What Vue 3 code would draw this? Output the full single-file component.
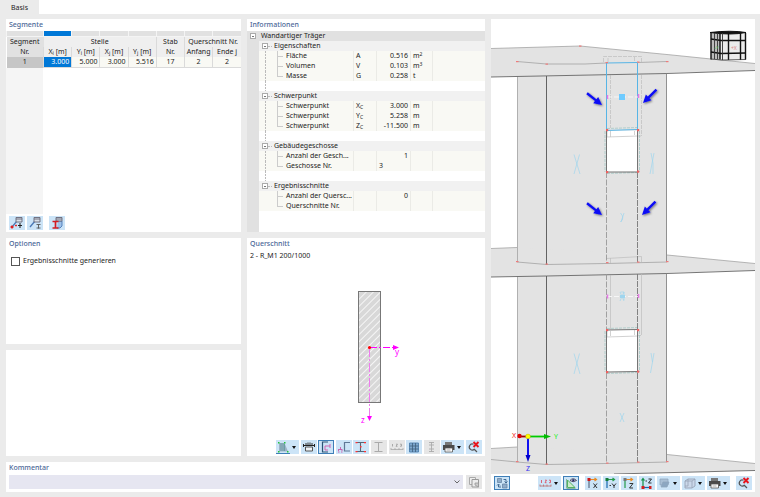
<script setup>
import { h, ref } from "vue";

const generateSections = ref(false);
const comment = ref("");

const columns = [
  { label: "X", sub: "i", unit: "[m]" },
  { label: "Y", sub: "i", unit: "[m]" },
  { label: "X", sub: "j", unit: "[m]" },
  { label: "Y", sub: "j", unit: "[m]" },
  { label: "Nr." },
  { label: "Anfang" },
  { label: "Ende j" },
];

const segment = ["3.000", "5.000", "3.000", "5.516", "17", "2", "2"];

const infoRows = [
  { type: "group", name: "Eigenschaften", first: true },
  { type: "item", name: "Fläche", symbol: "A", value: "0.516", unit: "m", sup: "2" },
  { type: "item", name: "Volumen", symbol: "V", value: "0.103", unit: "m", sup: "3" },
  { type: "item", name: "Masse", symbol: "G", value: "0.258", unit: "t", last: true },
  { type: "blank" },
  { type: "group", name: "Schwerpunkt" },
  { type: "item", name: "Schwerpunkt", symbol: "X", sub: "C", value: "3.000", unit: "m" },
  { type: "item", name: "Schwerpunkt", symbol: "Y", sub: "C", value: "5.258", unit: "m" },
  { type: "item", name: "Schwerpunkt", symbol: "Z", sub: "C", value: "-11.500", unit: "m", last: true },
  { type: "blank" },
  { type: "group", name: "Gebäudegeschosse" },
  { type: "item", name: "Anzahl der Gesch...", value: "1" },
  { type: "item", name: "Geschosse Nr.", value: "3", left: true, last: true },
  { type: "blank" },
  { type: "group", name: "Ergebnisschnitte", end: true },
  { type: "item", name: "Anzahl der Quersc...", value: "0", end: true },
  { type: "item", name: "Querschnitte Nr.", last: true, end: true },
];

// each icon is a list of [path, stroke, fill, stroke width] on a 16x14 canvas
const icons = {
  pickMember: [
    ["M3 11 8 5", "#4a78b5", "none", 1.2],
    ["M7 1.500h6v4.500h-6zM7 3h6", "#667", "#d8dfe8", 0.9],
    ["M2 10h2v2h-2zM6.500 9h1v1h-1z", "#d22", "#d22", 0.8],
    ["M11 7v5M9 9.500h4", "#222", "none", 1],
  ],
  pickSection: [
    ["M3 11 8 5", "#4a78b5", "none", 1.3],
    ["M7 1.500h6v4.500h-6zM7 3h6", "#667", "#d8dfe8", 0.9],
    ["M9.500 8.500h4M9.500 12h4M11.500 8.500v4", "#555", "none", 0.9],
  ],
  sectionInfo: [
    ["M9 5h4v5l-2 2H8", "#4a78b5", "#9ec1ea", 0.9],
    ["M7 1.500h6v3.500h-6zM7 3h6", "#667", "#d8dfe8", 0.9],
    ["M3.500 5.500h6M3.500 12h6M6.500 5.500v6.500", "#d21b24", "none", 1.7],
  ],
  stress: [
    ["M3 3 3 11.500H12L8.500 3z", "none", "#9db4c6", 0],
    ["M5 3v8M7 3v8M8.500 4v7", "#5f97a0", "none", 0.8],
    ["M2 2h1.500v1.500H2zM8 2h1.500v1.500H8zM2 11h1.500v1.500H2zM11 11h1.500v1.500H11z", "none", "#22c43a", 0],
  ],
  dims: [
    ["M2.500 5.500h11M2.500 4v3M13.500 4v3", "#222", "none", 1],
    ["M5 5V3M7 5V2.500M9 5V2.500M11 5V3", "#333", "none", 1],
    ["M4.500 7h7v4h-7z", "#555", "#eef3f8", 1],
  ],
  axes: [
    ["M10 2H4.500v10H10", "#2c5275", "none", 1.2],
    ["M7 10V6h5M12 4v4M7 10h3", "#d05aa8", "none", 0.9],
  ],
  center: [
    ["M14 2.500H8.500v8.500H14", "#5f7896", "none", 1.2],
    ["M2 12h1.500M5 12h1.500M3 9.500h3M4.500 7v3M2.500 11v-2M6 11v-2", "#c55aa8", "none", 0.9],
  ],
  profileRed: [
    ["M3 2.500h9M3 11.500h9M7.500 2.500v9", "#567", "none", 1.1],
    ["M2.500 2h2v1.200h-2zM11 2h2v1.200h-2zM2.500 11h2v1.200h-2zM11 11h2v1.200h-2zM7 6h1.500v1.500H7z", "none", "#f33", 0],
  ],
  profileGrey: [["M3.500 2.500h8M3.500 11.500h8M7.500 2.500v9", "#aaa", "none", 1]],
  numbersGrey: [
    ["M2 9.500h12M2 8v2M6 8v2M10 8v2M14 8v2", "#aaa", "none", 0.8],
    ["M3.500 4v2.500M7 4.200h1.500L7 6.300h1.500M11 4.200h1.500v2H11", "#999", "none", 0.8],
  ],
  grid: [
    ["M3.500 3h9v9h-9z", "#4f80ae", "#7da7cd", 0.9],
    ["M6.500 3v9M9.500 3v9M3.500 6h9M3.500 9h9", "#3f5f7e", "none", 0.8],
  ],
  profileDots: [["M5 2.500h5M5 5h5M5 9h5M5 11.500h5M7.500 2v10", "#aaa", "none", 0.9]],
  print: [
    ["M4 2h7v3H4z", "none", "#777", 0],
    ["M2 5h11.500v5H2z", "none", "#4a4a4a", 0],
    ["M4 8h7.500v4H4z", "#555", "#fff", 0.8],
    ["M5.500 10h4", "#888", "none", 0.7],
  ],
  reset: [
    ["M7.500 4.200a3 3 0 1 0 1 4.800M8 9 11 12", "#555", "none", 1.2],
    ["M7.500 2 12.500 7M12.500 2 7.500 7", "#e8141c", "none", 1.9],
  ],
  copy: [
    ["M3.500 2.500h6v7h-6z", "#aaa", "#eee", 1],
    ["M6 4.500h6.500v7.500H6z", "#999", "#ececec", 1],
    ["M9 8h3.500v4L9 10z", "#999", "#ccc", 0.8],
  ],
  swap: [
    ["M3.500 2.500h4v4h-4zM8.500 8h4.500v4h-4.500z", "#6786a5", "#8facca", 0.8],
    ["M9.500 3.500h2.500v3M10.500 5.500 12 7 13.500 5.500M7 11H4.500V8.500M3 9.500 4.500 8 6 9.500", "#345d87", "none", 0.9],
  ],
  numbersRed: [
    ["M2 10h11M2 8.500v2M5.500 8.500v2M9 8.500v2M13 8.500v2", "#b77", "none", 0.9],
    ["M3.500 4v3M7 4.200h1.500L7 6.700h1.500M11 4.200h1.500v2.500H11", "#d45", "none", 0.8],
  ],
  viewPlane: [
    ["M4.500 4v7.500h7.500z", "#53b165", "#cdeacb", 1],
    ["M3.500 12V3M3.500 12.500h9", "#7a8", "none", 0.8],
    ["M7 4.500Q10 1 13.500 4.500Q10 7 7 4.500z", "#445", "#dde", 0.9],
    ["M9.300 3.300h2v2h-2z", "none", "#226", 0],
  ],
  axisX: [
    ["M4 3.500h7M9.500 2 11.500 3.500 9.500 5", "#e98a24", "none", 1.2],
    ["M4 4v8", "#5a6b80", "none", 1.2],
    ["M2.500 2h3v3h-3z", "none", "#d01818", 0],
    ["M8.500 7.500 12 12M12 7.500 8.500 12", "#222", "none", 0.9],
  ],
  axisY: [
    ["M4 3.500h7M9.500 2 11.500 3.500 9.500 5", "#259b4a", "none", 1.2],
    ["M4 4v8", "#1769b0", "none", 1.2],
    ["M2.500 2h3v3h-3z", "none", "#137c3a", 0],
    ["M9 7.500l2 2.500L13 7.500M11 9.500V12M6.500 9.500h1.500", "#222", "none", 0.9],
  ],
  axisZ: [
    ["M4 3.500h7M9.500 2 11.500 3.500 9.500 5", "#e98a24", "none", 1.2],
    ["M4 4v8", "#239b4a", "none", 1.2],
    ["M2.500 2h3v3h-3z", "none", "#777", 0],
    ["M8.500 7.500h3.500L8.500 12H12", "#222", "none", 0.9],
  ],
  axisMinusZ: [
    ["M4 3v8M2.500 4.500 4 2.500 5.500 4.500", "#159047", "none", 1.2],
    ["M4 11.500h7", "#1769b0", "none", 1.2],
    ["M2.500 10h3v3h-3zM10 10h2.500v3H10z", "none", "#d32020", 0],
    ["M9.500 3h3L9.500 7h3M6.500 5H8", "#222", "none", 0.9],
  ],
  solids: [
    ["M3 3h8v6H3z", "#8fa6bc", "#a9bfd4", 0.8],
    ["M6 6h6l-2 5H4z", "#8fa6bc", "#8ca7c1", 0.8],
  ],
  box: [
    ["M3 5l3-2h7v7l-3 2H3z", "#97a3b6", "#cbd8ea", 0.9],
    ["M3 5h7v7M10 5l3-2M6 3v7H3", "#97a3b6", "none", 0.8],
  ],
};

const ToolIcon = (props) =>
  h(
    "svg",
    { viewBox: "0 0 16 14", width: 16, height: 14, "aria-hidden": "true" },
    icons[props.name].map(([d, stroke, fill, width]) =>
      h("path", { d, stroke, fill, "stroke-width": width })
    )
  );
ToolIcon.props = ["name"];

const segmentTools = [
  { icon: "pickMember", label: "Stab wählen" },
  { icon: "pickSection", label: "Schnitt wählen" },
  { icon: "sectionInfo", label: "Querschnitt bearbeiten", apart: true },
];

const sectionTools = [
  { icon: "stress", label: "Spannungspunkte", menu: true, half: true },
  { icon: "dims", label: "Bemaßung" },
  { icon: "axes", label: "Hauptachsen", active: true },
  { icon: "center", label: "Schubmittelpunkt" },
  { icon: "profileRed", label: "Profilpunkte" },
  { icon: "profileGrey", label: "Profil", disabled: true },
  { icon: "numbersGrey", label: "Nummerierung", disabled: true },
  { icon: "grid", label: "Raster" },
  { icon: "profileDots", label: "Teile", disabled: true },
  { icon: "print", label: "Drucken", menu: true },
  { icon: "reset", label: "Ansicht zurücksetzen" },
];

const sceneTools = [
  { icon: "swap", label: "Ansicht wechseln", active: true },
  { icon: "numbersRed", label: "Nummerierung", menu: true, far: true },
  { icon: "viewPlane", label: "Arbeitsebene", active: true },
  { icon: "axisX", label: "Ansicht in X", apart: true },
  { icon: "axisY", label: "Ansicht gegen Y" },
  { icon: "axisZ", label: "Ansicht in Z" },
  { icon: "axisMinusZ", label: "Ansicht gegen Z" },
  { icon: "solids", label: "Darstellung", menu: true },
  { icon: "box", label: "Projektion", menu: true },
  { icon: "print", label: "Drucken", menu: true },
  { icon: "reset", label: "Ansicht zurücksetzen", apart: true },
];

const pointers = [
  "translate(602 105) rotate(38)",
  "translate(643 103) rotate(135)",
  "translate(602 215) rotate(38)",
  "translate(642 215) rotate(135)",
];

const nodes = [
  [580, 46], [517, 61.5], [546.5, 64], [606.5, 62.5], [638, 62], [667, 61.5],
  [517, 261.5], [546.5, 264], [607, 262.5], [638, 262], [667, 261.5],
  [517, 461.5], [546.5, 464], [607, 463], [638, 462], [667, 461.5],
];

const corners = [
  [607, 130], [638, 130], [607, 172], [638, 171.5],
  [607, 330], [638, 330], [607, 372], [638, 371.5],
];
</script>

<template>
  <div class="app">
    <nav class="tabs">
      <a href="#basis" class="tab">Basis</a>
    </nav>
    <main class="board">
      <section class="panel segments">
        <h2>Segmente</h2>
        <div class="sheet">
          <table class="grid">
            <colgroup>
              <col class="col-nr" />
              <col v-for="n in 7" :key="n" />
            </colgroup>
            <thead>
              <tr class="strip">
                <td></td>
                <td v-for="n in 7" :key="n" :class="{ picked: n === 1 }"></td>
              </tr>
              <tr>
                <th rowspan="2" class="corner">Segment<br />Nr.</th>
                <th colspan="4">Stelle</th>
                <th class="cut">Stab</th>
                <th colspan="2" class="cut">Querschnitt Nr.</th>
              </tr>
              <tr>
                <th v-for="(c, i) in columns" :key="i" class="cut">
                  {{ c.label }}<sub v-if="c.sub">{{ c.sub }}</sub> {{ c.unit }}
                </th>
              </tr>
            </thead>
            <tbody>
              <tr>
                <th class="row-nr">1</th>
                <td v-for="(v, i) in segment" :key="i" :class="{ num: i < 4, current: i === 0 }">{{ v }}</td>
              </tr>
            </tbody>
          </table>
          <div class="rest"></div>
        </div>
        <div class="tools start">
          <button v-for="t in segmentTools" :key="t.icon" type="button" class="tool" :class="{ apart: t.apart }" :aria-label="t.label">
            <ToolIcon :name="t.icon" />
          </button>
        </div>
      </section>

      <section class="panel info">
        <h2>Informationen</h2>
        <div class="tree">
          <table>
            <colgroup>
              <col class="c-name" />
              <col class="c-symbol" />
              <col class="c-value" />
              <col class="c-unit" />
              <col />
            </colgroup>
            <tbody>
              <tr class="root">
                <th colspan="5">
                  <div class="node"><span class="toggle"></span>Wandartiger Träger</div>
                </th>
              </tr>
              <tr v-for="(r, i) in infoRows" :key="i" :class="r.type">
                <th v-if="r.type === 'group'" colspan="5">
                  <div class="node">
                    <span class="lane"><span class="toggle"></span></span>
                    <span class="dash"></span>{{ r.name }}
                  </div>
                </th>
                <td v-else-if="r.type === 'blank'" colspan="5">
                  <div class="node"><span class="lane line"></span></div>
                </td>
                <template v-else>
                  <th>
                    <div class="node">
                      <span class="lane" :class="{ line: !r.end }"></span>
                      <span class="elbow" :class="{ last: r.last }"></span>
                      {{ r.name }}
                    </div>
                  </th>
                  <td>{{ r.symbol }}<sub v-if="r.sub">{{ r.sub }}</sub></td>
                  <td :class="r.left ? 'left' : 'value'">{{ r.value }}</td>
                  <td>{{ r.unit }}<sup v-if="r.sup">{{ r.sup }}</sup></td>
                  <td></td>
                </template>
              </tr>
            </tbody>
          </table>
        </div>
      </section>

      <section class="panel options">
        <h2>Optionen</h2>
        <label class="check">
          <input v-model="generateSections" type="checkbox" />
          Ergebnisschnitte generieren
        </label>
      </section>

      <section class="panel spare"></section>

      <section class="panel profile">
        <h2>Querschnitt</h2>
        <p>2 - R_M1 200/1000</p>
        <svg class="drawing" viewBox="247 262 238 176">
          <defs>
            <pattern id="hatch" width="5" height="5" patternUnits="userSpaceOnUse" patternTransform="rotate(45)">
              <rect width="5" height="5" fill="#d8d8d8" />
              <path d="M0.500 0v5" stroke="#f6f6f6" />
            </pattern>
          </defs>
          <rect x="358.500" y="291.500" width="22" height="111" fill="url(#hatch)" stroke="#777" />
          <path d="M370 347.500h24" stroke="#f0f" stroke-dasharray="7 2 2 2" />
          <path d="M369.500 348v68" stroke="#ee7cee" stroke-dasharray="9 2 2 2" />
          <path d="M393 345l6 2.500-6 2.500zM367 416h5l-2.500 5z" fill="#f0f" />
          <circle cx="369.500" cy="347.500" r="1.600" fill="#f00" />
          <text x="395" y="355" fill="#f0f" font-size="8">y</text>
          <text x="361" y="423" fill="#f0f" font-size="8">z</text>
        </svg>
        <div class="tools section-tools">
          <button
            v-for="t in sectionTools" :key="t.icon" type="button" class="tool"
            :class="{ active: t.active, menu: t.menu, half: t.half }" :disabled="t.disabled" :aria-label="t.label"
          >
            <ToolIcon :name="t.icon" />
          </button>
        </div>
      </section>

      <section class="panel comment">
        <h2><label for="comment">Kommentar</label></h2>
        <div class="entry">
          <div class="combo">
            <select id="comment" v-model="comment">
              <option value=""></option>
            </select>
            <svg class="chevron" viewBox="0 0 6 4" width="6" height="4"><path d="M0.500 0.500 3 3 5.500 0.500" fill="none" stroke="#666" /></svg>
          </div>
          <button type="button" class="tool" disabled aria-label="Kommentare"><ToolIcon name="copy" /></button>
        </div>
      </section>

      <section class="panel scene">
        <svg class="model" viewBox="491 19 264 455" preserveAspectRatio="xMidYMid slice">
          <defs>
            <filter id="drop" x="-50%" y="-50%" width="200%" height="200%">
              <feDropShadow dx="1" dy="1" stdDeviation="0.800" flood-color="#000" flood-opacity="0.500" />
            </filter>
          </defs>
          <!-- slabs and core walls -->
          <g fill="#e3e3e3">
            <path d="M517 70H667V460H517z" />
            <path d="M491 48.500 580 46 672 55 755 63.500V70.500L667 73 491 77z" />
            <path d="M491 248.500 517 247.500 667 255 755 263.500V270.500L667 273 491 277z" />
            <path d="M491 448.500 517 447 667 454.500 755 463.500V470.500L614 474H491z" />
          </g>
          <g fill="none" stroke="#999" stroke-width="0.700">
            <path d="M491 48.500 580 46 672 55 755 63.500" />
            <path d="M517 61.500 546.500 64H585L606 63M638 62.500 667 61.500" />
            <path d="M491 248.500 517 247.500M667 255 755 263.500M491 448.500 517 447M667 454.500 755 463.500" />
            <path d="M517.500 76.500V262M517.500 276.500V462" />
            <path d="M517 262 546.500 264.500 606 263.500 667 262M491 459.500 517 462 546.500 464.500 606 463.500 667 462" />
          </g>
          <g fill="none" stroke="#666" stroke-width="0.900">
            <path d="M491 77 667 73.500 755 70.500M491 277 546.500 276 667 273.500 755 270.500M614 474 755 470.500" />
            <path d="M546.500 76V264.500M546.500 276V464.500" stroke="#555" />
            <path d="M666.500 73.500V262M666.500 273.500V462" stroke="#888" />
          </g>
          <path d="M607 130.500H637.500V171.500L607 172zM607 330.500 637.500 329.500V371.500L607 372z" fill="#fff" />
          <!-- hidden beam edges -->
          <g fill="none" stroke="#bdbdbd" stroke-width="0.700">
            <path d="M603.500 62V56.500H641.500V62M608 62V58M634.500 61V56.500M610.500 75V128M641.500 75V136" stroke-dasharray="4 1" />
            <path d="M607 131V137L638 136M610.500 131V137M634.500 131V135M638 136H641" />
            <path d="M606 258.500 641.500 256.500V262M610.500 258V263M610.500 275V329M641.500 274V335" />
            <path d="M607 331V337L638 336M610.500 331V336M634.500 330V335M638 335.500H641" />
          </g>
          <g fill="none" stroke="#9cc4c2" stroke-width="0.700" stroke-dasharray="3 1">
            <path d="M605 131V172M639.500 131V172M607 173.500 638 172.500M607 128.500 638 127.500" />
            <path d="M605 331V372M639.500 331V372M607 373.500 638 372.500M607 328.500 638 327.500" />
          </g>
          <g fill="none" stroke="#666" stroke-width="0.900">
            <path d="M606.500 131V172M637.500 131V172M606.500 172H638M606.500 330V372M637.500 330V372M606.500 330 638 329.500M606.500 372 638 371.500" />
            <path d="M637.500 172V262M637.500 274V329M637.500 373V462" stroke-dasharray="6 1" stroke="#777" />
            <path d="M606.500 172V262M606.500 274V329M606.500 373V462" stroke-dasharray="6 1.500" stroke="#999" />
          </g>
          <path d="M606.500 130.500V63L637.500 62.500V129.500z" fill="none" stroke="#57b5e6" />
          <path d="M607 97H638M607 296.500H638" stroke="#f6f6f6" stroke-dasharray="5 2" />
          <rect x="619" y="94" width="6" height="6" fill="#6fcbff" />
          <!-- local axis marks -->
          <g fill="none" stroke="#9fd5ee" stroke-width="0.700">
            <path d="M574 154.500 580 174M579.500 154.500 574 174M651 153Q654 163 653 174M654 153 650 174" />
            <path d="M574 353.500 580 374M579.500 353.500 574 374M651 353 652.500 362 650.500 373M654 353 652.500 362" />
            <path d="M620.500 213Q625 218 620.500 222M624 213 621 222M620 292 624 301M624 292 620 301M620.500 292H624V300M620 413 624 422M624 413 620 422" />
          </g>
          <path d="M620 295h5v3h-5z" fill="#9fd5ee" />
          <path d="M607.500 95v4M638.500 94v4M607.500 294.500v4M638.500 294v4" stroke="#e779e7" stroke-width="1.500" />
          <rect v-for="([x, y], i) in nodes" :key="'n' + i" :x="x - 1" :y="y - 0.5" width="2.500" height="1.200" fill="#ef7b7b" />
          <rect v-for="([x, y], i) in corners" :key="'c' + i" :x="x - 1" :y="y - 1" width="2.200" height="2.200" fill="#f06060" />
          <g filter="url(#drop)">
            <path v-for="p in pointers" :key="p" d="M-19-1.200H-8V-4L0 0-8 4V1.200H-19z" fill="#1010f5" :transform="p" />
          </g>
          <!-- coordinate axes -->
          <path d="M528 436.500H520" stroke="#a00000" stroke-width="1.800" />
          <circle cx="519.500" cy="436" r="2.200" fill="#d00" />
          <path d="M528 436.500H545" stroke="#0c0" stroke-width="1.800" />
          <path d="M544 434l7 2.500-7 2.500z" fill="#0b0" />
          <path d="M528 437V456" stroke="#1010f0" stroke-width="2" />
          <path d="M525.500 455h5l-2.500 7z" fill="#00c" />
          <circle cx="528" cy="436.500" r="2.400" fill="#ff0" stroke="#a90" stroke-width="0.400" />
          <g font-size="7">
            <text x="512" y="438" fill="#f02020">X</text>
            <text x="554" y="439" fill="#20f020">Y</text>
            <text x="526" y="471" fill="#3030f0">Z</text>
          </g>
          <!-- view cube -->
          <path d="M710.500 33 730 31.500 745.500 33V59.500H710.500z" fill="#ebebeb" />
          <path d="M711 33H720V59.500H711z" fill="#bcbcbc" />
          <path d="M710 32.500Q731 30 746 32.500Q731 35.500 710 32.500z" fill="#111" stroke="#111" />
          <path d="M711 39 721 40.500H746M711 52 721 53.500 746 53" fill="none" stroke="#111" stroke-width="1.500" />
          <path d="M711 33V59.500M720 33V59.500M728.500 34V60M740.500 33V60M745.500 33V59.500" stroke="#111" stroke-width="1.400" />
          <path d="M714.500 33V59M717.500 33V59M722.500 33V60" stroke="#333" stroke-width="0.900" />
          <path d="M711 59 722 60 746 59.500" fill="none" stroke="#333" stroke-width="0.800" />
          <text x="731" y="49.500" fill="#d88" font-size="5">+X</text>
          <text x="714" y="49" fill="#5b5" font-size="4">+Y</text>
        </svg>
        <div class="tools scene-tools">
          <button
            v-for="t in sceneTools" :key="t.icon" type="button" class="tool"
            :class="{ active: t.active, menu: t.menu, apart: t.apart, far: t.far }" :aria-label="t.label"
          >
            <ToolIcon :name="t.icon" />
          </button>
        </div>
      </section>
    </main>
  </div>
</template>

<style>
body {
  margin: 0;
  background: #ebebeb;
}
</style>

<style scoped>
.app {
  display: flex;
  flex-direction: column;
  min-height: 100vh;
  background: #ebebeb;
  color: #1c1c1c;
  font: 7px/10px "Noto Sans", "Open Sans", sans-serif;
}

.tabs {
  display: flex;
  height: 14px;
  background: #fff;
}

.tab {
  box-sizing: border-box;
  width: 39px;
  padding-top: 3px;
  background: #ebebeb;
  color: inherit;
  text-align: center;
  text-decoration: none;
}

.board {
  flex: 1;
  display: grid;
  grid-template-columns: 235fr 238fr 264fr;
  grid-template-rows: 213fr 106fr 106fr 30px;
  grid-template-areas:
    "segments info scene"
    "options profile scene"
    "spare profile scene"
    "comment comment scene";
  gap: 6px;
  padding: 5px 5px 5px 6px;
}

.panel {
  display: flex;
  flex-direction: column;
  min-width: 0;
  background: #fff;
}

.segments { grid-area: segments; }
.info { grid-area: info; }
.options { grid-area: options; }
.spare { grid-area: spare; }
.profile { grid-area: profile; }
.comment { grid-area: comment; }
.scene { grid-area: scene; }

h2 {
  margin: 0;
  padding: 1px 3px;
  color: #4b6797;
  font-size: 7px;
  font-weight: 500;
}

table {
  width: 100%;
  border-collapse: collapse;
  table-layout: fixed;
}

th,
td {
  height: 10px;
  padding: 0;
  font-weight: 400;
  line-height: 10px;
  white-space: nowrap;
}

sub,
sup {
  font-size: 5px;
  line-height: 0;
}

sub {
  vertical-align: -1px;
}

sup {
  vertical-align: 2px;
}

/* segment table */
.sheet {
  flex: 1;
  display: flex;
  flex-direction: column;
}

.col-nr {
  width: 37px;
}

.grid th {
  background: #efefef;
  text-align: center;
}

.grid .strip td {
  height: 5px;
  border-bottom: 1px solid #f4f4f4;
  border-left: 1px solid #f4f4f4;
  background: #e1e1e1;
  line-height: 5px;
}

.grid .strip .picked {
  background: #0078d7;
}

.grid .cut {
  border-left: 1px solid #dadada;
}

.grid .corner {
  background: #e1e1e1;
}

.grid .row-nr {
  background: #c6c6c6;
}

.grid tbody td {
  border: 1px solid #dadada;
  border-width: 0 0 1px 1px;
  background: #f9f9f4;
  text-align: center;
}

.grid tbody .num {
  padding-right: 2px;
  text-align: right;
}

.grid tbody .current {
  background: #0078d7;
  color: #fff;
}

.rest {
  flex: 1;
  width: 37px;
  background: #f5f5f5;
}

/* property tree */
.tree {
  flex: 1;
  background: linear-gradient(to right, #e1e1e1 12px, #fff 12px);
}

.c-name { width: 106px; }
.c-symbol { width: 23px; }
.c-value { width: 34px; }
.c-unit { width: 22px; }

.tree th {
  text-align: left;
}

.node {
  display: flex;
  align-items: center;
  height: 10px;
}

.root {
  background: #e1e1e1;
}

.root .toggle {
  margin: 0 5px 0 3px;
}

.group .node,
.item .node,
.blank .node {
  margin-left: 12px;
}

.group .node { background: #f1f1f1; }
.item .node { background: #f9f9f4; }

.item td {
  padding-left: 3px;
  box-shadow: inset 1px 0 #ebebe6;
  background: #f9f9f4;
}

.item .value {
  padding: 0 2px 0 0;
  text-align: right;
}

.toggle {
  box-sizing: border-box;
  width: 6px;
  height: 6px;
  border: 1px solid #aaa;
  background: linear-gradient(#777, #777) center / 2px 1px no-repeat #fff;
}

.lane {
  display: flex;
  flex: none;
  align-items: center;
  box-sizing: border-box;
  width: 9px;
  height: 10px;
  padding-left: 3px;
}

.lane.line {
  background: repeating-linear-gradient(#bbb 0 2px, transparent 2px 3px) 6px 0 / 1px 10px no-repeat;
}

.dash {
  width: 4px;
  margin-right: 2px;
  border-top: 1px dotted #bbb;
}

.elbow {
  flex: none;
  width: 6px;
  height: 10px;
  margin: 0 3px 0 9px;
  background:
    linear-gradient(#ccc, #ccc) 0 0 / 1px 10px no-repeat,
    linear-gradient(#ccc, #ccc) 0 5px / 6px 1px no-repeat;
}

.elbow.last {
  background:
    linear-gradient(#ccc, #ccc) 0 0 / 1px 5px no-repeat,
    linear-gradient(#ccc, #ccc) 0 5px / 6px 1px no-repeat;
}

/* options */
.check {
  display: flex;
  align-items: center;
  gap: 3px;
  padding: 6px 5px;
}

.check input {
  appearance: none;
  box-sizing: border-box;
  width: 9px;
  height: 9px;
  margin: 0;
  border: 1px solid #555;
  background: #fff;
}

.check input:checked {
  background: #0078d7;
}

/* cross-section */
.profile p {
  margin: 0;
  padding: 1px 3px;
}

.drawing,
.model {
  flex: 1 1 0px;
  width: 100%;
  height: 0;
  min-height: 0;
}

/* toolbars */
.tools {
  display: flex;
  gap: 2px;
  padding: 2px 3px;
}

.section-tools {
  align-self: flex-end;
  justify-content: space-between;
  gap: 0;
  width: 206px;
}

.scene-tools {
  background: #fff;
}

.tool {
  box-sizing: border-box;
  display: flex;
  flex: none;
  align-items: center;
  justify-content: center;
  width: 16px;
  height: 14px;
  padding: 0;
  border: 0;
  background: #cce4f7;
}

.tool.apart { margin-left: 4px; }
.tool.far { margin-left: auto; }

.tool.active {
  box-shadow: inset 0 0 0 1px #3f7fb8;
}

.tool.half {
  background: linear-gradient(#3f7fb8, #3f7fb8) 0 100% / 14px 1px no-repeat #cce4f7;
}

.tool:disabled {
  background: #e6e6e6;
}

.tool.menu {
  justify-content: flex-start;
  width: 23px;
}

.tool.menu::after {
  content: "";
  border: 2px solid transparent;
  border-top: 3px solid #111;
  border-bottom: 0;
}

/* comment */
.entry {
  display: flex;
  gap: 3px;
  padding: 1px 3px 3px;
}

.combo {
  position: relative;
  flex: 1;
}

.combo select {
  appearance: none;
  display: block;
  width: 100%;
  height: 14px;
  padding: 0 12px 0 3px;
  border: 0;
  background: #e6e6f1;
  font: inherit;
}

.chevron {
  position: absolute;
  top: 5px;
  right: 3px;
  pointer-events: none;
}
</style>
